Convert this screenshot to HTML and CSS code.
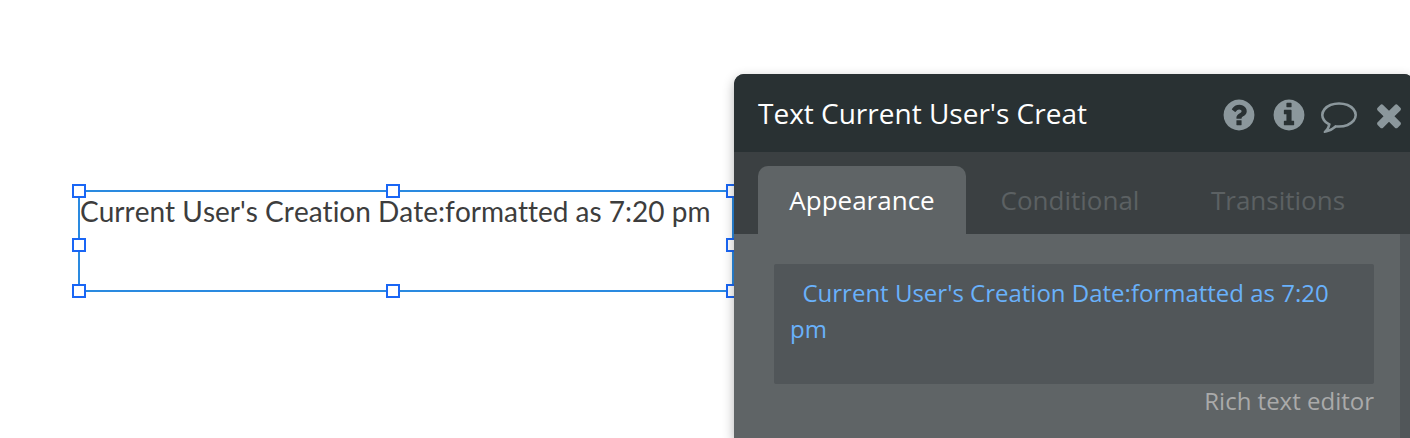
FILE: index.html
```html
<!DOCTYPE html>
<html lang="en">
<head>
<meta charset="utf-8">
<title>Property editor</title>
<link rel="stylesheet" href="styles.css">
</head>
<body>
<main class="canvas">
  <div class="element">
    <p class="element-text">Current User's Creation Date:formatted as 7:20 pm</p>
    <span class="handle top start"></span>
    <span class="handle top center"></span>
    <span class="handle top end"></span>
    <span class="handle middle start"></span>
    <span class="handle middle end"></span>
    <span class="handle bottom start"></span>
    <span class="handle bottom center"></span>
    <span class="handle bottom end"></span>
  </div>

  <section class="panel">
    <header class="panel-header">
      <h1 class="panel-title">Text Current User's Creat</h1>
      <div class="panel-actions">
        <button class="icon-button" type="button" aria-label="Help">
          <svg class="icon" viewBox="0 0 1792 1792"><path d="M1024 1376v-192q0-14-9-23t-23-9h-192q-14 0-23 9t-9 23v192q0 14 9 23t23 9h192q14 0 23-9t9-23zm256-672q0-88-55.500-163t-138.500-116-170-41q-243 0-371 213-15 24 8 42l132 100q7 6 19 6 16 0 25-12 53-68 86-92 34-24 86-24 48 0 85.500 26t37.500 59q0 38-20 61t-68 45q-63 28-115.500 86.500t-52.500 125.500v36q0 14 9 23t23 9h192q14 0 23-9t9-23q0-19 21.500-49.500t54.500-49.500q32-18 49-28.500t46-35 44.500-48 28-60.500 12.500-81zm384 192q0 209-103 385.500t-279.500 279.500-385.500 103-385.500-103-279.500-279.500-103-385.500 103-385.500 279.500-279.500 385.500-103 385.500 103 279.500 279.500 103 385.500z"/></svg>
        </button>
        <button class="icon-button" type="button" aria-label="Info">
          <svg class="icon" viewBox="0 0 1792 1792"><path d="M1152 1376v-160q0-14-9-23t-23-9h-96v-512q0-14-9-23t-23-9h-320q-14 0-23 9t-9 23v160q0 14 9 23t23 9h96v320h-96q-14 0-23 9t-9 23v160q0 14 9 23t23 9h448q14 0 23-9t9-23zm-128-896v-160q0-14-9-23t-23-9h-192q-14 0-23 9t-9 23v160q0 14 9 23t23 9h192q14 0 23-9t9-23zm640 416q0 209-103 385.500t-279.500 279.500-385.500 103-385.500-103-279.500-279.500-103-385.500 103-385.500 279.500-279.500 385.500-103 385.500 103 279.500 279.500 103 385.500z"/></svg>
        </button>
        <button class="icon-button" type="button" aria-label="Comment">
          <svg class="icon" viewBox="0 0 1792 1792"><path d="M896 384q-204 0-381.500 69.500t-282 187.500-104.500 255q0 112 71.500 213.500t201.500 175.500l87 50-27 96q-24 91-70 172 152-63 275-171l43-38 57 6q69 8 130 8 204 0 381.500-69.500t282-187.500 104.500-255-104.500-255-282-187.500-381.500-69.500zm896 512q0 174-120 321.500t-326 233-450 85.500q-70 0-145-8-198 175-460 242-49 14-114 22h-5q-15 0-27-10.500t-16-27.500v-1q-3-4-.5-12t2-10 4.500-9.500l6-9 7-8.500 8-9q7-8 31-34.500t34.500-38 31-39.500 32.500-51 27-59 26-76q-157-89-247.500-220t-90.500-281q0-174 120-321.500t326-233 450-85.500 450 85.500 326 233 120 321.500z"/></svg>
        </button>
        <button class="icon-button" type="button" aria-label="Close">
          <svg class="icon" viewBox="0 0 1792 1792"><path d="M1490 1322q0 40-28 68l-136 136q-28 28-68 28t-68-28l-294-294-294 294q-28 28-68 28t-68-28l-136-136q-28-28-28-68t28-68l294-294-294-294q-28-28-28-68t28-68l136-136q28-28 68-28t68 28l294 294 294-294q28-28 68-28t68 28l136 136q28 28 28 68t-28 68l-294 294 294 294q28 28 28 68z"/></svg>
        </button>
      </div>
    </header>
    <nav class="tabs" role="tablist">
      <button class="tab active" type="button" role="tab" aria-selected="true">Appearance</button>
      <button class="tab" type="button" role="tab" aria-selected="false">Conditional</button>
      <button class="tab" type="button" role="tab" aria-selected="false">Transitions</button>
    </nav>
    <div class="panel-body">
      <div class="fields">
        <textarea class="expression" aria-label="Text content" spellcheck="false">  Current User's Creation Date:formatted as 7:20 pm</textarea>
        <button class="link-button" type="button">Rich text editor</button>
      </div>
      <div class="scroll-track"></div>
    </div>
  </section>
</main>
</body>
</html>
```

FILE: styles.css
```css
* {
  box-sizing: border-box;
}

body {
  margin: 0;
  background: #fff;
  font-family: "Open Sans", sans-serif;
}

button {
  margin: 0;
  padding: 0;
  border: 0;
  background: none;
  font: inherit;
  cursor: pointer;
}

.canvas {
  position: relative;
  min-height: 100vh;
  overflow: hidden;
}

/* Selected element on the canvas */
.element {
  position: absolute;
  left: 78px;
  top: 190px;
  width: 656px;
  height: 102px;
  border: 2px solid #2a8ae0;
}

.element-text {
  margin: 0;
  color: #3d3d3d;
  font-family: Lato, sans-serif;
  font-size: 28px;
  font-kerning: none;
  font-variant-ligatures: none;
  line-height: 38px;
  white-space: nowrap;
}

.handle {
  position: absolute;
  width: 14px;
  height: 14px;
  border: 2px solid #1a66f5;
  background: #fff;
  transform: translate(-50%, -50%);
}

.top { top: -1px; }
.middle { top: 54%; }
.bottom { top: calc(100% + 1px); }
.start { left: -1px; }
.center { left: 48%; }
.end { left: calc(100% + 1px); }

/* Floating property editor */
.panel {
  position: absolute;
  left: 734px;
  right: -4px;
  top: 74px;
  bottom: 0;
  display: flex;
  flex-direction: column;
  border-radius: 10px 10px 0 0;
  background: #3b4042;
  box-shadow: 0 4px 12px rgba(0, 0, 0, 0.3);
  overflow: hidden;
}

.panel-header {
  display: flex;
  align-items: flex-start;
  justify-content: space-between;
  padding: 20px 7px 19px 24px;
  background: #293133;
}

.panel-title {
  margin: 0;
  color: #fff;
  font-size: 28px;
  font-weight: 400;
  line-height: 38px;
}

.panel-actions {
  display: flex;
  gap: 14px;
  padding-top: 3px;
}

.icon-button {
  display: flex;
}

.icon {
  width: 36px;
  height: 36px;
  fill: #8b979c;
}

.tabs {
  display: flex;
  padding: 14px 24px 0;
}

.tab {
  width: 208px;
  padding: 16px 0;
  border-radius: 10px 10px 0 0;
  color: #5c6163;
  font-size: 26px;
  line-height: 36px;
}

.tab.active {
  background: #5f6466;
  color: #fff;
}

.panel-body {
  display: flex;
  flex: 1;
  background: #5f6466;
}

.fields {
  display: flex;
  flex: 1;
  flex-direction: column;
  padding: 30px 26px 0 40px;
}

.expression {
  display: block;
  width: 100%;
  height: 120px;
  padding: 11px 16px;
  border: 0;
  border-radius: 2px;
  outline: 0;
  background: #515659;
  color: #69b1fb;
  font: inherit;
  font-size: 24px;
  line-height: 36px;
  resize: none;
}

.link-button {
  align-self: flex-end;
  color: #aaa;
  font-size: 24px;
  line-height: 34px;
}

.scroll-track {
  width: 14px;
  background: #515659;
}
```
